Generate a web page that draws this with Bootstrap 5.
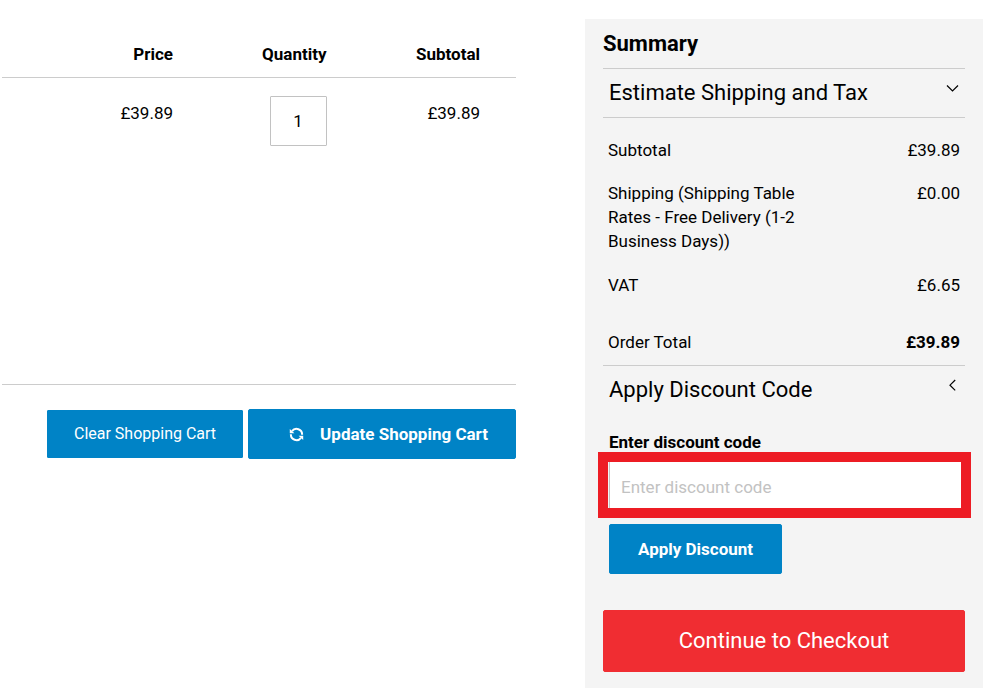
<!DOCTYPE html>
<html lang="en">
<head>
<meta charset="utf-8">
<meta name="viewport" content="width=device-width, initial-scale=1">
<title>Shopping Cart</title>
<link href="https://cdn.jsdelivr.net/npm/bootstrap@5.3.0/dist/css/bootstrap.min.css" rel="stylesheet">
<style>
  body { font-family: Roboto, "Liberation Sans", sans-serif; font-size: 17px; line-height: 24px; color: #000; background: #fff; }
  .cart-layout { display: grid; grid-template-columns: 514fr 398fr; column-gap: 69px; padding: 19px 17px 0 2px; align-items: start; }
  .cart-table { width: 100%; table-layout: fixed; border-bottom: 1px solid #ccc; }
  .cart-table th, .cart-table td { text-align: right; vertical-align: top; padding: 0 36px 0 0; }
  .cart-table th { font-weight: 700; padding-top: 23px; padding-bottom: 11px; border-bottom: 1px solid #ccc; }
  .cart-table td { height: 307px; padding-top: 23px; }
  .cart-table td.qty-cell { padding-top: 18px; }
  .col-wide { width: 207px; }
  .qty-input { width: 57px; height: 50px; border: 1px solid #c2c2c2; border-radius: 1px; text-align: center; color: #000; padding: 0; }
  .btn-shop { --bs-btn-color: #fff; --bs-btn-bg: #0083c6; --bs-btn-border-color: #0083c6; --bs-btn-hover-color: #fff; --bs-btn-hover-bg: #006fa8; --bs-btn-hover-border-color: #006fa8; --bs-btn-border-radius: 2px; font-size: 17px; line-height: 24px; padding: 12px 28px; }
  .btn-clear { font-size: 16px; padding: 11px 26px; --bs-btn-border-radius: 1px; }
  .btn-update { padding: 12px 27px 12px 40px; }
  .btn-checkout { --bs-btn-bg: #f02d32; --bs-btn-border-color: #f02d32; --bs-btn-hover-bg: #d3262b; --bs-btn-hover-border-color: #d3262b; font-size: 22px; line-height: 30px; padding: 15px; margin-top: 36px; }
  .cart-actions { gap: 5px; }
  .summary { background: #f4f4f4; padding: 11px 18px 16px; }
  .summary-title { font-size: 22px; line-height: 28px; font-weight: 700; margin: 0; padding-bottom: 10px; }
  .fold { width: 100%; border: 0; border-top: 1px solid #ccc; background: none; color: #000; font-size: 22px; line-height: 30px; padding: 9px 6px; text-align: left; }
  .totals { border-top: 1px solid #ccc; width: 100%; }
  .totals th, .totals td { font-weight: 400; padding: 10px 5px 9px; vertical-align: top; }
  .totals td { text-align: right; }
  .totals tr:first-child > * { padding-top: 20px; }
  .totals tr:nth-child(2) > * { padding-bottom: 10px; }
  .totals tr:last-child > * { padding-top: 24px; padding-bottom: 11px; }
  .totals tr:last-child td { font-weight: 700; }
  .label-col { width: 56%; }
  .discount { padding: 16px 3px 0 6px; }
  .discount label { font-weight: 700; margin-bottom: 6px; }
  .highlight::after { content: ""; position: absolute; inset: -8px -9px -8px -11px; border: 10px solid #ed1c24; pointer-events: none; }
  .code-input { height: 50px; border: 1px solid #c2c2c2; border-radius: 1px; padding: 4px 11px 0; color: #000; }
  .code-input::placeholder { color: #c2c2c2; }
  .btn-apply { margin-top: 14px; }
</style>
</head>
<body>
<div class="cart-layout">
  <main>
    <table class="cart-table">
      <colgroup><col class="col-wide"><col><col></colgroup>
      <thead><tr><th scope="col">Price</th><th scope="col">Quantity</th><th scope="col">Subtotal</th></tr></thead>
      <tbody><tr>
        <td>£39.89</td>
        <td class="qty-cell"><input class="qty-input" type="text" inputmode="numeric" value="1" aria-label="Quantity"></td>
        <td>£39.89</td>
      </tr></tbody>
    </table>
    <div class="cart-actions d-flex justify-content-end align-items-center mt-4">
      <button type="button" class="btn btn-shop btn-clear">Clear Shopping Cart</button>
      <button type="button" class="btn btn-shop btn-update fw-bold d-flex align-items-center gap-3">
        <svg width="15" height="15" viewBox="0 0 15 15" fill="none" stroke="#fff" stroke-width="2" aria-hidden="true"><path d="M3 4.2A5.6 5.6 0 0 1 13.1 7.8M12 10.8A5.6 5.6 0 0 1 1.9 7.2"/><path d="M.8 2v4.3h4.6zM14.2 13V8.7H9.600z" fill="#fff" stroke="none"/></svg>
        <span>Update Shopping Cart</span>
      </button>
    </div>
  </main>
  <aside class="summary">
    <h2 class="summary-title">Summary</h2>
    <button type="button" class="fold d-flex justify-content-between">
      <span>Estimate Shipping and Tax</span>
      <svg width="13" height="22" viewBox="0 0 13 22" fill="none" stroke="#000" stroke-width="1.2" aria-hidden="true"><path d="M1 7.500l5.500 5.500L12 7.500"/></svg>
    </button>
    <table class="totals">
      <colgroup><col class="label-col"><col></colgroup>
      <tbody>
        <tr><th scope="row">Subtotal</th><td>£39.89</td></tr>
        <tr><th scope="row">Shipping (Shipping Table Rates - Free Delivery (1-2 Business Days))</th><td>£0.00</td></tr>
        <tr><th scope="row">VAT</th><td>£6.65</td></tr>
        <tr><th scope="row">Order Total</th><td>£39.89</td></tr>
      </tbody>
    </table>
    <button type="button" class="fold d-flex justify-content-between">
      <span>Apply Discount Code</span>
      <svg width="13" height="22" viewBox="0 0 13 22" fill="none" stroke="#000" stroke-width="1.2" aria-hidden="true"><path d="M9.200 5L4 10.200l5.200 5.200"/></svg>
    </button>
    <form class="discount">
      <label for="code" class="d-block">Enter discount code</label>
      <div class="highlight position-relative">
        <input id="code" type="text" class="code-input d-block w-100" placeholder="Enter discount code">
      </div>
      <button type="button" class="btn btn-shop btn-apply fw-bold">Apply Discount</button>
    </form>
    <button type="button" class="btn btn-shop btn-checkout w-100">Continue to Checkout</button>
  </aside>
</div>
<script src="https://cdn.jsdelivr.net/npm/bootstrap@5.3.0/dist/js/bootstrap.bundle.min.js"></script>
</body>
</html>
